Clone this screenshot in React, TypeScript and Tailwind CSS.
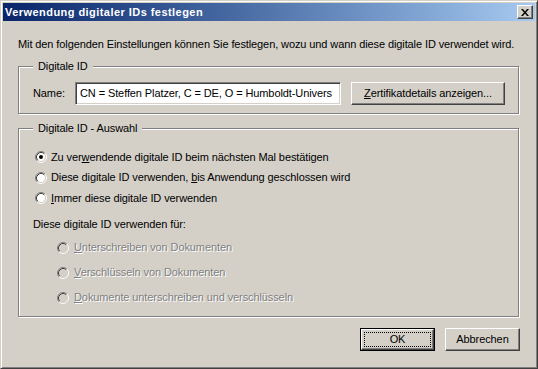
import React from "react";

const font = { fontFamily: '"Liberation Sans", Arial, sans-serif' };

function Radio({ checked = false, disabled = false }: { checked?: boolean; disabled?: boolean }) {
  return (
    <svg width="12" height="12" viewBox="0 0 12 12" className="shrink-0">
      <circle cx="6" cy="6" r="4.2" fill={disabled ? "#d4d0c8" : "#ffffff"} />
      <path d="M2.11 9.89 A5.5 5.5 0 0 1 9.89 2.11" fill="none" stroke="#808080" strokeWidth="1" />
      <path d="M9.89 2.11 A5.5 5.5 0 0 1 2.11 9.89" fill="none" stroke="#ffffff" strokeWidth="1" />
      <path d="M2.82 9.18 A4.5 4.5 0 0 1 9.18 2.82" fill="none" stroke="#404040" strokeWidth="1" />
      <path d="M9.18 2.82 A4.5 4.5 0 0 1 2.82 9.18" fill="none" stroke="#d4d0c8" strokeWidth="1" />
      {checked && <circle cx="6" cy="6" r="2" fill="#000000" />}
    </svg>
  );
}

function Button({ children, def = false }: { children: React.ReactNode; def?: boolean }) {
  if (def) {
    return (
      <div className="w-[75px] h-[23px] border border-black">
        <div className="w-full h-full border border-t-white border-l-white border-b-[#404040] border-r-[#404040] shadow-[inset_-1px_-1px_0_#808080] flex items-center justify-center p-[2px]">
          <div className="w-full h-full border border-dotted border-black flex items-center justify-center text-[11px] text-black leading-[13px]">
            {children}
          </div>
        </div>
      </div>
    );
  }
  return (
    <div className="w-[75px] h-[23px] border border-t-white border-l-white border-b-[#404040] border-r-[#404040] shadow-[inset_-1px_-1px_0_#808080] flex items-center justify-center text-[11px] text-black leading-[13px]">
      {children}
    </div>
  );
}

export default function App() {
  return (
    <div style={font} className="w-[538px] h-[369px] bg-[#d4d0c8] border border-t-[#d4d0c8] border-l-[#d4d0c8] border-b-[#404040] border-r-[#404040] shadow-[inset_1px_1px_0_#ffffff,inset_-1px_-1px_0_#808080] p-[2px] flex flex-col text-[11px] leading-[13px] text-black tracking-[-0.1px]">
      {/* Title bar */}
      <div className="h-[18px] bg-gradient-to-r from-[#0a246a] to-[#a6caf0] flex items-center pl-[2px] pr-[2px] shrink-0">
        <span className="text-white font-bold text-[11px] leading-[13px] flex-1 tracking-[0.45px]">Verwendung digitaler IDs festlegen</span>
        <div className="w-[16px] h-[14px] bg-[#d4d0c8] border border-t-white border-l-white border-b-[#404040] border-r-[#404040] shadow-[inset_-1px_-1px_0_#808080] flex items-center justify-center">
          <svg width="8" height="7" viewBox="0 0 8 7">
            <path d="M0 0h2l2 2.5 2-2.5h2L5 3.5 8 7H6L4 4.5 2 7H0l3-3.5z" fill="#000" />
          </svg>
        </div>
      </div>

      {/* Body */}
      <div className="flex flex-col pl-[15px] pr-[15px]">
        <div className="mt-[17px] h-[13px] whitespace-nowrap">
          Mit den folgenden Einstellungen können Sie festlegen, wozu und wann diese digitale ID verwendet wird.
        </div>

        {/* Group 1 */}
        <div className="relative mt-[15px] mr-[1px] h-[48px] border border-[#808080] shadow-[inset_1px_1px_0_#ffffff,1px_1px_0_#ffffff] pl-[14px] pt-[15px] flex items-start">
          <span className="absolute -top-[7px] left-[14px] px-[5px] bg-[#d4d0c8] leading-[13px]">Digitale ID</span>
          <div className="h-[23px] flex items-center w-[42px]">Name:</div>
          <div className="w-[266px] h-[23px] bg-white border border-t-[#808080] border-l-[#808080] border-b-white border-r-white shadow-[inset_1px_1px_0_#404040,inset_-1px_-1px_0_#d4d0c8] flex items-center pl-[4px] pr-[2px] overflow-hidden whitespace-nowrap">
            CN = Steffen Platzer, C = DE, O = Humboldt-Univers
          </div>
          <div className="ml-[10px] w-[154px] h-[23px] border border-t-white border-l-white border-b-[#404040] border-r-[#404040] shadow-[inset_-1px_-1px_0_#808080] flex items-center justify-center whitespace-nowrap">
            <span><span className="underline">Z</span>ertifikatdetails anzeigen...</span>
          </div>
        </div>

        {/* Group 2 */}
        <div className="relative mt-[14px] mr-[1px] h-[189px] border border-[#808080] shadow-[inset_1px_1px_0_#ffffff,1px_1px_0_#ffffff] pl-[14px] pt-[18px] flex flex-col">
          <span className="absolute -top-[7px] left-[14px] px-[5px] bg-[#d4d0c8] leading-[13px]">Digitale ID - Auswahl</span>
          <div className="h-[20px] flex items-center pl-[2px] gap-[4px]">
            <Radio checked />
            <span>Zu ver<span className="underline">w</span>endende digitale ID beim nächsten Mal bestätigen</span>
          </div>
          <div className="h-[21px] flex items-center pl-[2px] gap-[4px]">
            <Radio />
            <span>Diese digitale ID verwenden, <span className="underline">b</span>is Anwendung geschlossen wird</span>
          </div>
          <div className="h-[20px] flex items-center pl-[2px] gap-[4px]">
            <Radio />
            <span><span className="underline">I</span>mmer diese digitale ID verwenden</span>
          </div>
          <div className="mt-[10px] h-[13px]">Diese digitale ID verwenden für:</div>
          <div className="mt-[4px] flex flex-col pl-[24px] text-[#808080] [text-shadow:1px_1px_0_#ffffff]">
            <div className="h-[25px] flex items-center gap-[5px]">
              <Radio disabled />
              <span><span className="underline">U</span>nterschreiben von Dokumenten</span>
            </div>
            <div className="h-[25px] flex items-center gap-[5px]">
              <Radio disabled />
              <span><span className="underline">V</span>erschlüsseln von Dokumenten</span>
            </div>
            <div className="h-[25px] flex items-center gap-[5px]">
              <Radio disabled />
              <span><span className="underline">D</span>okumente unterschreiben und verschlüsseln</span>
            </div>
          </div>
        </div>

        {/* Buttons */}
        <div className="mt-[11px] flex justify-end gap-[10px]">
          <Button def>OK</Button>
          <Button>Abbrechen</Button>
        </div>
      </div>
    </div>
  );
}
